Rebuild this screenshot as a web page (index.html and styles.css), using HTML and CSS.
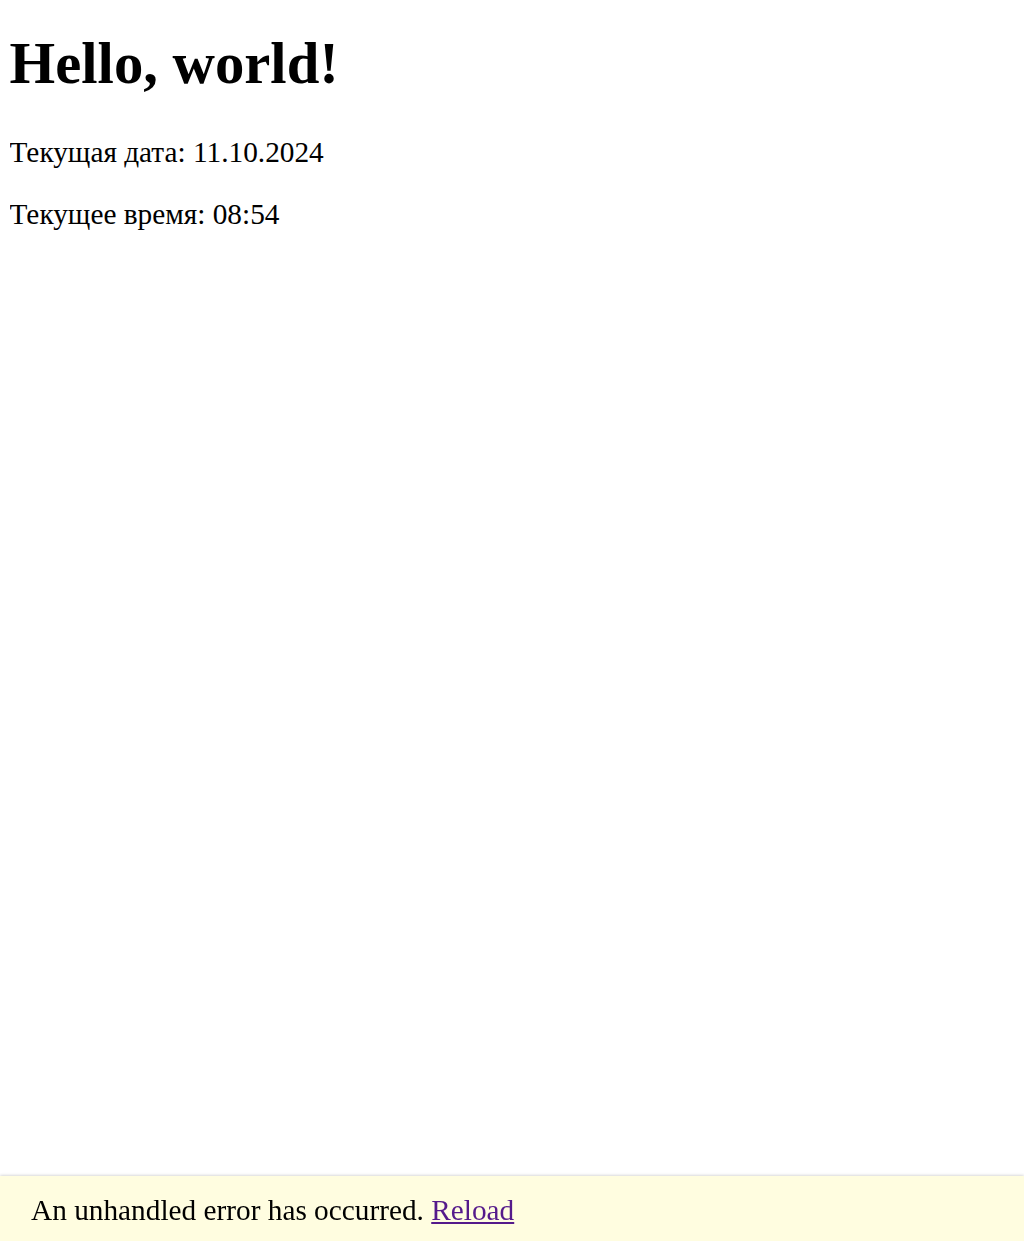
FILE: index.html
```html
<!DOCTYPE html>
<html lang="ru">
<head>
<meta charset="utf-8">
<title>Hello</title>
<link rel="stylesheet" href="styles.css">
</head>
<body>
<div class="page">
  <h1 class="title">Hello, world!</h1>
  <p class="line">Текущая дата: 11.10.2024</p>
  <p class="line">Текущее время: 08:54</p>
</div>
<div class="error-ui">
  An unhandled error has occurred.
  <a href="#" class="reload">Reload</a>
</div>
</body>
</html>
```
FILE: styles.css
```css
html, body {
  background: #ffffff;
}
body {
  margin: 0 9.6px;
  font-family: "Liberation Serif", "Times New Roman", serif;
  color: #000000;
}
.page {
  display: flow-root;
}
.title {
  font-size: 58.7px;
  font-weight: bold;
  margin: 29.5px 0 39px;
}
.line {
  font-size: 29.3px;
  margin: 29.3px 0;
}
.error-ui {
  position: fixed;
  left: 0;
  right: 0;
  bottom: 0;
  background: #fffde0;
  box-shadow: 0 -1.5px 3px rgba(0, 0, 0, 0.2);
  padding: 18px 31px 14px;
  font-size: 29.3px;
  font-family: "Liberation Serif", "Times New Roman", serif;
  z-index: 1000;
}
.reload {
  color: #551a8b;
  text-decoration: underline;
}
```
